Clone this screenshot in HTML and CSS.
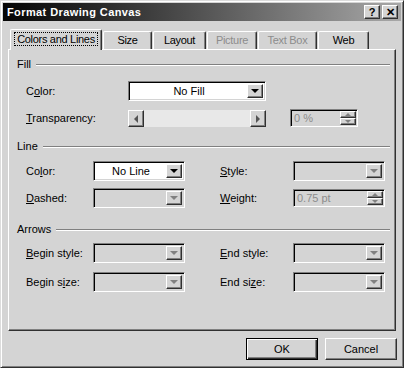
FILE: index.html
```html
<!DOCTYPE html>
<html lang="en">
<head>
    <meta charset="UTF-8">
    <title>Format Drawing Canvas</title>
    <link rel="stylesheet" href="styles.css">
</head>
<body>
<div class="dialog">
    <div class="titlebar">
        <span class="title">Format Drawing Canvas</span>
        <span class="tbtn">?</span>
        <span class="tbtn">&#x2715;</span>
    </div>

    <div class="tabs">
        <div class="tab active w1"><span class="focus">Colors and Lines</span></div>
        <div class="tab w2">Size</div>
        <div class="tab w3">Layout</div>
        <div class="tab off w4">Picture</div>
        <div class="tab off w5">Text Box</div>
        <div class="tab w6">Web</div>
    </div>

    <div class="panel">
        <!-- Fill -->
        <div class="head head-fill"><span>Fill</span><i class="rule"></i></div>
        <div class="grid fill-grid">
            <label>C<u>o</u>lor:</label>
            <div class="combo on"><span class="val">No Fill</span><span class="drop"><b class="tri"></b></span></div>
            <span></span>
            <span></span>

            <label><u>T</u>ransparency:</label>
            <div class="scroll">
                <span class="sbtn"><b class="tri-l"></b></span>
                <span class="track"></span>
                <span class="sbtn"><b class="tri-r"></b></span>
            </div>
            <span></span>
            <div class="spin"><span class="val dim">0 %</span><span class="arrows"><span class="up"><b class="tri-u"></b></span><span class="dn"><b class="tri-d"></b></span></span></div>
        </div>

        <!-- Line -->
        <div class="head head-line"><span>Line</span><i class="rule"></i></div>
        <div class="grid line-grid">
            <label>Co<u>l</u>or:</label>
            <div class="combo on"><span class="val">No Line</span><span class="drop"><b class="tri"></b></span></div>
            <span></span>
            <label><u>S</u>tyle:</label>
            <div class="combo"><span class="val"></span><span class="drop"><b class="tri gray"></b></span></div>

            <label><u>D</u>ashed:</label>
            <div class="combo"><span class="val"></span><span class="drop"><b class="tri gray"></b></span></div>
            <span></span>
            <label><u>W</u>eight:</label>
            <div class="spin"><span class="val dim">0.75 pt</span><span class="arrows"><span class="up"><b class="tri-u"></b></span><span class="dn"><b class="tri-d"></b></span></span></div>
        </div>

        <!-- Arrows -->
        <div class="head head-arrows"><span>Arrows</span><i class="rule"></i></div>
        <div class="grid line-grid arrows-grid">
            <label><u>B</u>egin style:</label>
            <div class="combo"><span class="val"></span><span class="drop"><b class="tri gray"></b></span></div>
            <span></span>
            <label><u>E</u>nd style:</label>
            <div class="combo"><span class="val"></span><span class="drop"><b class="tri gray"></b></span></div>

            <label>Begin s<u>i</u>ze:</label>
            <div class="combo"><span class="val"></span><span class="drop"><b class="tri gray"></b></span></div>
            <span></span>
            <label>End si<u>z</u>e:</label>
            <div class="combo"><span class="val"></span><span class="drop"><b class="tri gray"></b></span></div>
        </div>
    </div>

    <div class="footer">
        <button class="btn default">OK</button>
        <button class="btn">Cancel</button>
    </div>
</div>
</body>
</html>
```

FILE: styles.css
```css
body,html{
    margin:0;
    width:100%;
    height:100%;
    background:#d4d4d4;
}
body {
    font-family: "Liberation Sans", Arial, sans-serif;
    font-size: 11px;
    color: #000;
}
.dialog {
    width: 404px;
    height: 368px;
    box-sizing: border-box;
    background: #d4d4d4;
    border: 1px solid;
    border-color: #dcdcdc #303030 #303030 #dcdcdc;
    box-shadow: inset 1px 1px #fff, inset -1px -1px #808080;
    padding: 2px;
}
.titlebar {
    height: 18px;
    display: flex;
    align-items: center;
    padding: 0 3px 0 3px;
    background: linear-gradient(to right, #050505, #2a2a2a 25%, #a8a8a8);
}
.title {
    flex-grow: 1;
    color: #fff;
    font-weight: bold;
    font-size: 11px;
    letter-spacing: 0.4px;
    padding-left: 1px;
}
.tbtn {
    width: 14px;
    height: 12px;
    line-height: 12px;
    text-align: center;
    font-weight: bold;
    font-size: 11px;
    background: #d4d4d4;
    border: 1px solid;
    border-color: #fff #303030 #303030 #fff;
    box-shadow: inset -1px -1px #808080;
}
.tbtn + .tbtn {
    margin-left: 2px;
}

/* tabs */
.tabs {
    display: flex;
    align-items: flex-end;
    gap: 1px;
    margin: 8px 0 0 7px;
    height: 20px;
}
.tab {
    box-sizing: border-box;
    height: 18px;
    line-height: 17px;
    text-align: center;
    border: 1px solid;
    border-bottom: none;
    border-color: #fff #303030 #303030 #fff;
    box-shadow: inset -1px 0 #808080;
    border-radius: 2px 2px 0 0;
    position: relative;
    font-size: 11px;
    letter-spacing: -0.3px;
}
.tab.active {
    height: 21px;
    margin-bottom: -1px;
    background: #d4d4d4;
    z-index: 2;
    padding-top: 1px;
}
.focus {
    outline: 1px dotted #000;
    padding: 0 2px;
}
.tab.off {
    color: #8c8c8c;
}
.w1 { width: 92px; }
.w2 { width: 49px; }
.w3 { width: 53px; }
.w4 { width: 50px; }
.w5 { width: 59px; }
.w6 { width: 51px; }

/* panel */
.panel {
    box-sizing: border-box;
    margin: 0 5px 0 5px;
    height: 282px;
    border: 1px solid;
    border-color: #fff #303030 #303030 #fff;
    box-shadow: inset -1px -1px #808080;
    padding: 7px 5px 0 0;
}
.head {
    display: flex;
    align-items: center;
    height: 14px;
    padding-left: 8px;
}
.rule {
    flex-grow: 1;
    margin-left: 5px;
    margin-top: 1px;
    border-top: 1px solid #808080;
    border-bottom: 1px solid #fff;
}
.head-fill { margin-bottom: 10px; }
.head-line { margin-top: 11px; margin-bottom: 8px; }
.head-arrows { margin-top: 14px; margin-bottom: 7px; }

.grid {
    display: grid;
    grid-auto-rows: 20px;
    row-gap: 7px;
    align-items: center;
    padding-left: 17px;
}
.fill-grid {
    grid-template-columns: 102px 138px 24px 68px;
}
.line-grid {
    grid-template-columns: 67px 92px 35px 73px 92px;
}
.arrows-grid {
    row-gap: 9px;
}
label {
    white-space: nowrap;
}

/* combo box */
.combo, .spin {
    box-sizing: border-box;
    height: 20px;
    display: flex;
    align-items: stretch;
    border: 1px solid;
    border-color: #808080 #fff #fff #808080;
    box-shadow: inset 1px 1px #000, inset -1px -1px #d4d4d4;
    padding: 2px 2px 2px 2px;
    background: #d4d4d4;
}
.combo.on {
    background: #fff;
}
.val {
    flex-grow: 1;
    line-height: 14px;
    text-align: center;
}
.dim {
    color: #8c8c8c;
    text-align: left;
    padding-left: 1px;
}
.drop, .sbtn {
    box-sizing: border-box;
    width: 16px;
    display: flex;
    align-items: center;
    justify-content: center;
    background: #d4d4d4;
    border: 1px solid;
    border-color: #fff #303030 #303030 #fff;
    box-shadow: inset -1px -1px #808080;
}
.tri {
    width: 0;
    height: 0;
    border-left: 4px solid transparent;
    border-right: 4px solid transparent;
    border-top: 4px solid #000;
}
.tri.gray {
    border-top-color: #808080;
}

/* scrollbar */
.scroll {
    height: 17px;
    display: flex;
    margin-top: 1px;
}
.sbtn {
    width: 16px;
}
.track {
    flex-grow: 1;
    background: #e8e8e8;
}
.tri-l, .tri-r {
    width: 0;
    height: 0;
    border-top: 4px solid transparent;
    border-bottom: 4px solid transparent;
}
.tri-l { border-right: 4px solid #555; }
.tri-r { border-left: 4px solid #555; }

/* spin box */
.spin {
    height: 18px;
    padding: 1px 1px 1px 2px;
}
.spin .val {
    line-height: 14px;
}
.arrows {
    width: 16px;
    display: flex;
    flex-direction: column;
}
.up, .dn {
    flex-grow: 1;
    display: flex;
    align-items: center;
    justify-content: center;
    background: #d4d4d4;
    border: 1px solid;
    border-color: #fff #303030 #303030 #fff;
    box-shadow: inset -1px -1px #808080;
}
.tri-u, .tri-d {
    width: 0;
    height: 0;
    border-left: 3px solid transparent;
    border-right: 3px solid transparent;
}
.tri-u { border-bottom: 3px solid #808080; }
.tri-d { border-top: 3px solid #808080; }

/* footer */
.footer {
    display: flex;
    justify-content: flex-end;
    gap: 7px;
    margin: 7px 4px 0 0;
}
.btn {
    box-sizing: border-box;
    width: 72px;
    height: 22px;
    font-family: "Liberation Sans", Arial, sans-serif;
    font-size: 11px;
    background: #d4d4d4;
    border: 1px solid;
    border-color: #fff #303030 #303030 #fff;
    box-shadow: inset -1px -1px #808080;
    padding: 0;
}
.btn.default {
    border: 1px solid #000;
    box-shadow: inset 1px 1px #fff, inset -1px -1px #303030, inset -2px -2px #808080;
}
```
